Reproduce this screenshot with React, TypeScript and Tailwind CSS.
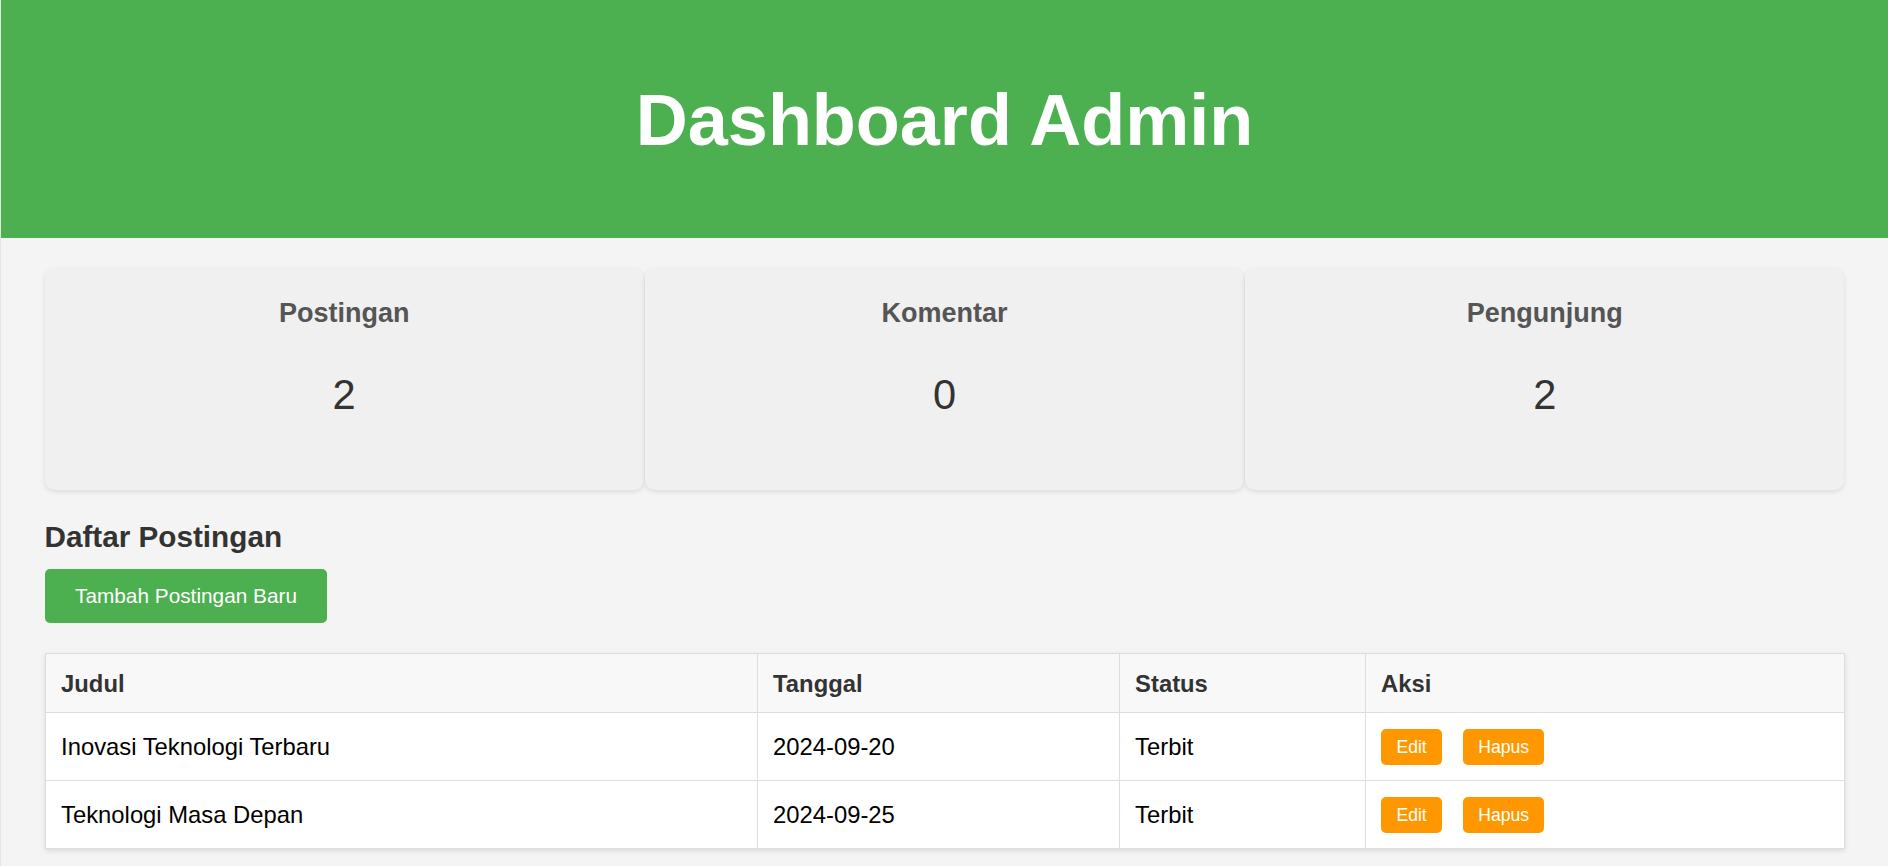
const stats = [
  { label: 'Postingan', value: 2 },
  { label: 'Komentar', value: 0 },
  { label: 'Pengunjung', value: 2 },
];

const posts = [
  { title: 'Inovasi Teknologi Terbaru', date: '2024-09-20', status: 'Terbit' },
  { title: 'Teknologi Masa Depan', date: '2024-09-25', status: 'Terbit' },
];

export default function App() {
  return (
    <div
      className="min-h-screen bg-[#f4f4f4] border-l border-[#e4e4e4] text-[#333]"
      style={{ fontFamily: '"Liberation Sans", Arial, sans-serif' }}
    >
      <header className="h-[238px] bg-[#4caf50] pt-[79px] text-center">
        <h1 className="text-[72px] leading-[83px] font-bold text-white">Dashboard Admin</h1>
      </header>

      <main className="max-w-[1800px] mx-auto pt-[30px] pb-10">
        <div className="grid grid-cols-3 gap-px">
          {stats.map((s) => (
            <div
              key={s.label}
              className="bg-[#f0f0f0] rounded-[10px] shadow-[0_2px_5px_rgba(0,0,0,0.1)] text-center pt-[30px] pb-[71px]"
            >
              <h3 className="text-[27px] leading-[31px] font-bold text-[#555]">{s.label}</h3>
              <p className="mt-[42px] text-[41.6px] leading-[48px] text-[#333]">{s.value}</p>
            </div>
          ))}
        </div>

        <h2 className="mt-[30px] text-[29.7px] leading-[34px] font-bold text-[#333]">Daftar Postingan</h2>

        <button className="mt-[15px] bg-[#4caf50] text-white text-[20.8px] leading-[24px] px-[30.5px] py-[15px] rounded-[5px]">
          Tambah Postingan Baru
        </button>

        <table className="mt-[30px] w-full table-fixed border-collapse bg-white shadow-[0_2px_5px_rgba(0,0,0,0.1)] text-[23.8px] leading-[27px]">
          <thead>
            <tr className="bg-[#f8f8f8]">
              <th className="w-[712px] border border-[#ddd] p-[15.6px] text-left font-bold text-[#333]">Judul</th>
              <th className="w-[362px] border border-[#ddd] p-[15.6px] text-left font-bold text-[#333]">Tanggal</th>
              <th className="w-[246px] border border-[#ddd] p-[15.6px] text-left font-bold text-[#333]">Status</th>
              <th className="border border-[#ddd] p-[15.6px] text-left font-bold text-[#333]">Aksi</th>
            </tr>
          </thead>
          <tbody>
            {posts.map((p) => (
              <tr key={p.title} className="text-black">
                <td className="border border-[#ddd] p-[15.6px]">{p.title}</td>
                <td className="border border-[#ddd] p-[15.6px]">{p.date}</td>
                <td className="border border-[#ddd] p-[15.6px]">{p.status}</td>
                <td className="border border-[#ddd] p-[15.6px]">
                  <div className="flex gap-[21px]">
                    <button className="bg-[#ff9800] text-white text-[17.6px] leading-[20.2px] px-[15.3px] py-[7.8px] rounded-[5px]">
                      Edit
                    </button>
                    <button className="bg-[#ff9800] text-white text-[17.6px] leading-[20.2px] px-[15.3px] py-[7.8px] rounded-[5px]">
                      Hapus
                    </button>
                  </div>
                </td>
              </tr>
            ))}
          </tbody>
        </table>
      </main>
    </div>
  );
}
